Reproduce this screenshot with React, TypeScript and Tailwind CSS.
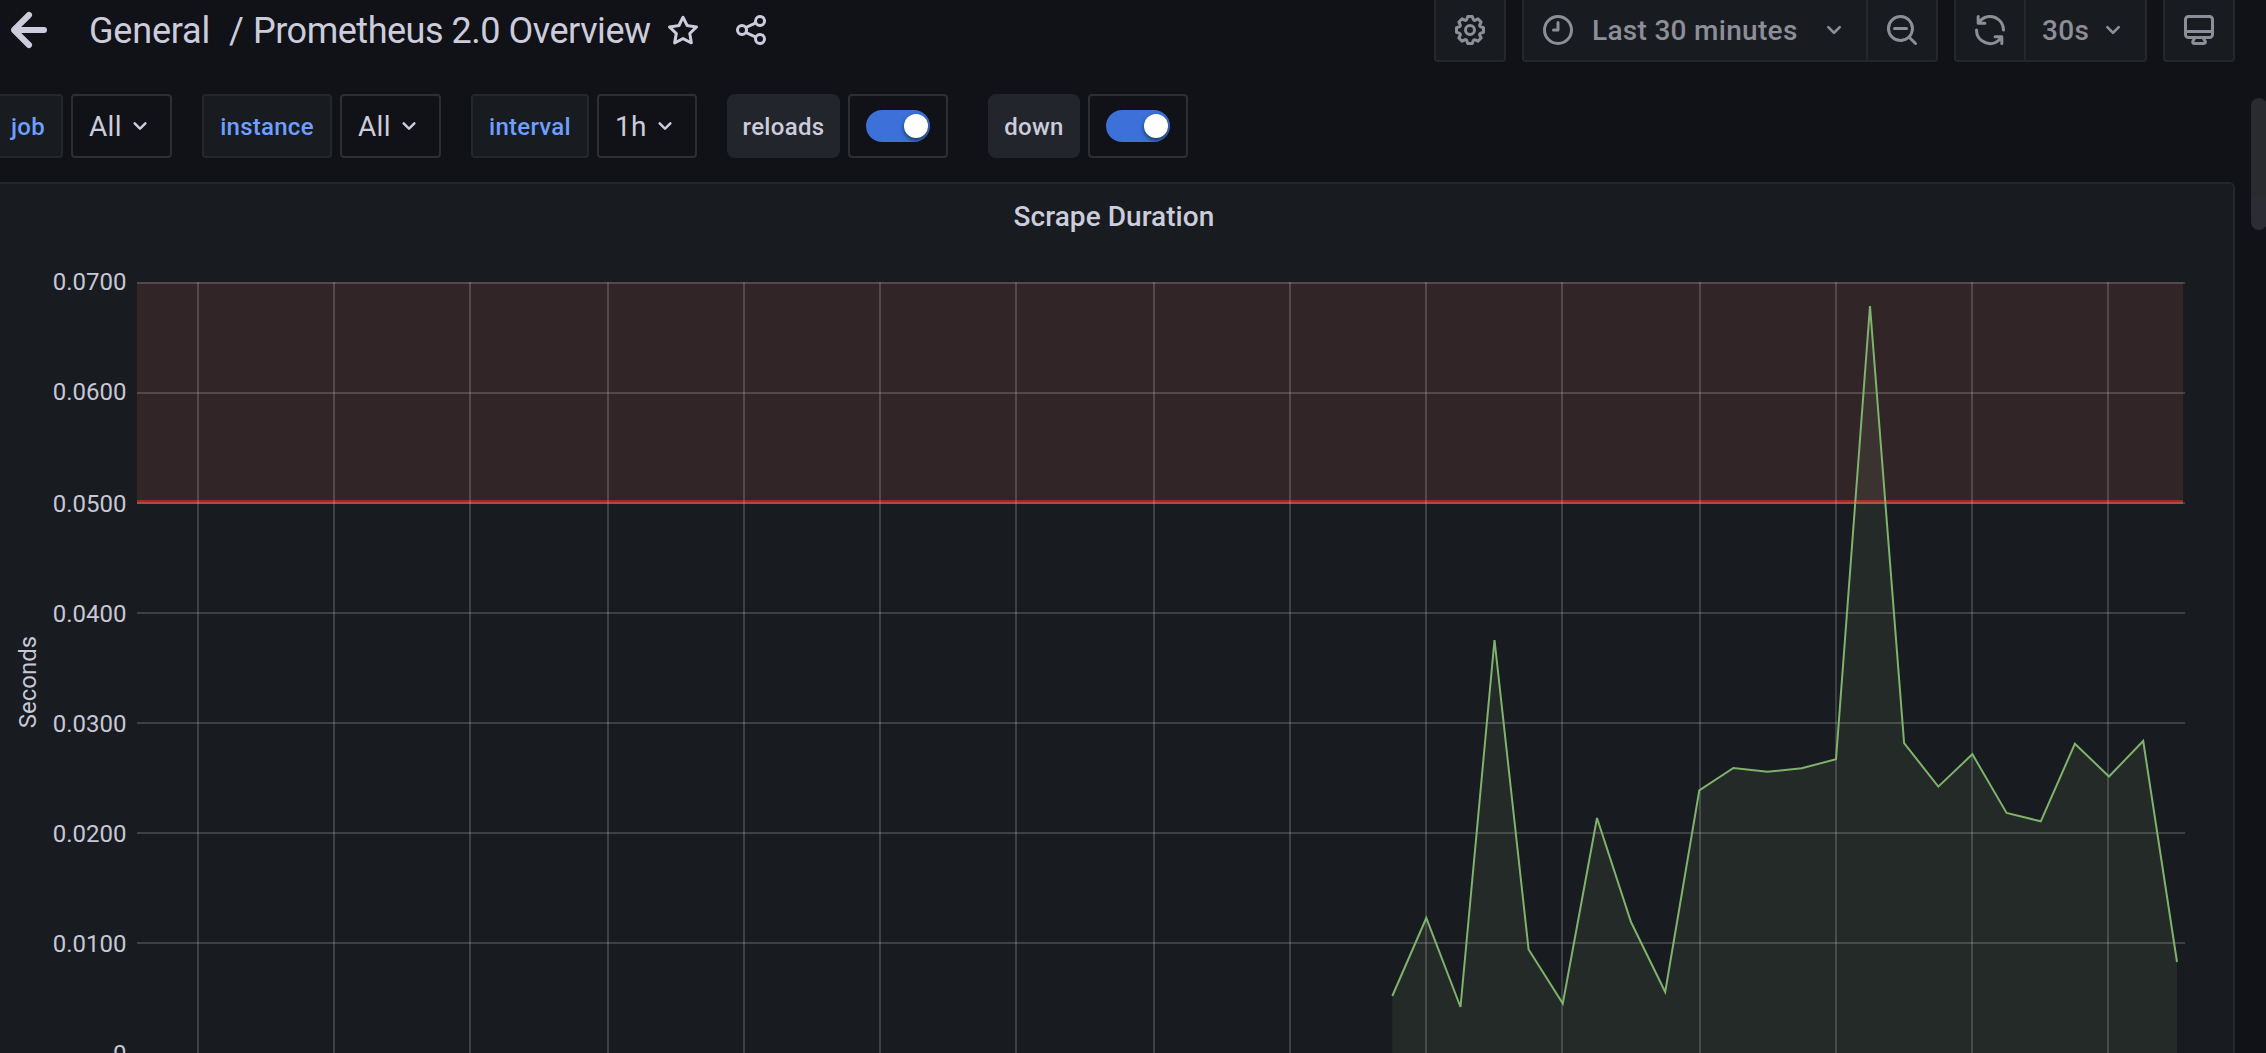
import type { ReactNode } from "react";

const ICONS = {
  arrowLeft:
    "M17,11H9.41l3.3-3.29a1,1,0,1,0-1.42-1.42l-5,5a1,1,0,0,0-.21.33,1,1,0,0,0,0,.76,1,1,0,0,0,.21.33l5,5a1,1,0,0,0,1.42,0,1,1,0,0,0,0-1.42L9.41,13H17a1,1,0,0,0,0-2Z",
  star: "M22,9.67A1,1,0,0,0,21.14,9l-5.69-.83L12.9,3a1,1,0,0,0-1.8,0L8.55,8.16,2.86,9a1,1,0,0,0-.81.68,1,1,0,0,0,.25,1l4.13,4-1,5.68A1,1,0,0,0,6.9,21.44L12,18.77l5.1,2.67a.93.93,0,0,0,.46.12,1,1,0,0,0,.59-.19,1,1,0,0,0,.4-1l-1-5.68,4.13-4A1,1,0,0,0,22,9.67Zm-6.15,4a1,1,0,0,0-.29.88l.72,4.2-3.76-2a1.06,1.06,0,0,0-.94,0l-3.76,2,.72-4.2a1,1,0,0,0-.29-.88l-3-3,4.21-.61a1,1,0,0,0,.76-.55L12,5.7l1.88,3.82a1,1,0,0,0,.76.55l4.21.61Z",
  share:
    "M18,14a4,4,0,0,0-3.08,1.48l-5.1-2.35a3.64,3.64,0,0,0,0-2.26l5.1-2.35A4,4,0,1,0,14,6a4.17,4.17,0,0,0,.07.71L8.79,9.14a4,4,0,1,0,0,5.72l5.28,2.43A4.17,4.17,0,0,0,14,18a4,4,0,1,0,4-4ZM18,4a2,2,0,1,1-2,2A2,2,0,0,1,18,4ZM6,14a2,2,0,1,1,2-2A2,2,0,0,1,6,14Zm12,6a2,2,0,1,1,2-2A2,2,0,0,1,18,20Z",
  cog: "M21.32,9.55l-1.89-.63.89-1.78A1,1,0,0,0,20.13,6L18,3.87a1,1,0,0,0-1.15-.19l-1.78.89-.63-1.89A1,1,0,0,0,13.5,2h-3a1,1,0,0,0-.95.68L8.92,4.57,7.14,3.68A1,1,0,0,0,6,3.87L3.87,6a1,1,0,0,0-.19,1.15l.89,1.78-1.89.63A1,1,0,0,0,2,10.5v3a1,1,0,0,0,.68.95l1.89.63-.89,1.78A1,1,0,0,0,3.87,18L6,20.13a1,1,0,0,0,1.15.19l1.78-.89.63,1.89a1,1,0,0,0,.95.68h3a1,1,0,0,0,.95-.68l.63-1.89,1.78.89A1,1,0,0,0,18,20.13L20.13,18a1,1,0,0,0,.19-1.15l-.89-1.78,1.89-.63A1,1,0,0,0,22,13.5v-3A1,1,0,0,0,21.32,9.55ZM20,12.78l-1.2.4A2,2,0,0,0,17.64,16l.57,1.14-1.1,1.1L16,17.64a2,2,0,0,0-2.79,1.16l-.4,1.2H11.22l-.4-1.2A2,2,0,0,0,8,17.64l-1.14.57-1.1-1.1L6.36,16A2,2,0,0,0,5.2,13.18L4,12.78V11.22l1.2-.4A2,2,0,0,0,6.36,8L5.79,6.89l1.1-1.1L8,6.36A2,2,0,0,0,10.82,5.2l.4-1.2h1.56l.4,1.2A2,2,0,0,0,16,6.36l1.14-.57,1.1,1.1L17.64,8a2,2,0,0,0,1.16,2.79l1.2.4ZM12,8a4,4,0,1,0,4,4A4,4,0,0,0,12,8Zm0,6a2,2,0,1,1,2-2A2,2,0,0,1,12,14Z",
  clock:
    "M12,2A10,10,0,1,0,22,12,10,10,0,0,0,12,2Zm0,18a8,8,0,1,1,8-8A8,8,0,0,1,12,20ZM12,6a1,1,0,0,0-1,1v4H9a1,1,0,0,0,0,2h3a1,1,0,0,0,1-1V7A1,1,0,0,0,12,6Z",
  zoomOut:
    "M21.71,20.29,18,16.61A9,9,0,1,0,16.61,18l3.68,3.68a1,1,0,0,0,1.42,0A1,1,0,0,0,21.71,20.29ZM11,18a7,7,0,1,1,7-7A7,7,0,0,1,11,18Zm4-8H7a1,1,0,0,0,0,2h8a1,1,0,0,0,0-2Z",
  sync: "M19.91,15.51H15.38a1,1,0,0,0,0,2h2.4A8,8,0,0,1,4,12a1,1,0,1,0-2,0,10,10,0,0,0,16.88,7.23V21a1,1,0,0,0,2,0V16.5A1,1,0,0,0,19.91,15.51ZM12,2A10,10,0,0,0,5.12,4.77V3a1,1,0,0,0-2,0V7.5a1,1,0,0,0,1,1h4.5a1,1,0,0,0,0-2H6.22A8,8,0,0,1,20,12a1,1,0,0,0,2,0A10,10,0,0,0,12,2Z",
  monitor:
    "M19,2H5A3,3,0,0,0,2,5V15a3,3,0,0,0,3,3H7.64l-.58,1a2,2,0,0,0,0,2,2,2,0,0,0,1.75,1h6.46A2,2,0,0,0,17,21a2,2,0,0,0,0-2l-.59-1H19a3,3,0,0,0,3-3V5A3,3,0,0,0,19,2ZM8.77,20,10,18H14l1.2,2ZM20,15a1,1,0,0,1-1,1H5a1,1,0,0,1-1-1V14H20Zm0-3H4V5A1,1,0,0,1,5,4H19a1,1,0,0,1,1,1Z",
  angleDown:
    "M17,9.17a1,1,0,0,0-1.41,0L12,12.71,8.46,9.17a1,1,0,0,0-1.41,0,1,1,0,0,0,0,1.42l4.24,4.24a1,1,0,0,0,1.42,0L17,10.59A1,1,0,0,0,17,9.17Z",
};

function Icon({ name, className = "size-9" }: { name: keyof typeof ICONS; className?: string }) {
  return (
    <svg viewBox="0 0 24 24" fill="currentColor" className={`shrink-0 ${className}`}>
      <path d={ICONS[name]} />
    </svg>
  );
}

function ToolButton({ className, children }: { className: string; children: ReactNode }) {
  return (
    <button
      className={`flex h-16 items-center border-2 border-[#25272c] bg-[#181b1f] text-[28px] leading-none font-medium tracking-[0.3px] text-[#8e8e99] ${className}`}
    >
      {children}
    </button>
  );
}

function Header() {
  return (
    <header className="flex h-[62px] items-end">
      <div className="-ml-[7px] flex h-16 items-center text-[#ccccdc]">
        <Icon name="arrowLeft" className="size-[72px]" />
        <h1 className="ml-6 w-[576px] pt-0.5 text-[36px] leading-none tracking-[-0.48px] whitespace-pre">
          <span className="inline-block w-[140px] tracking-[-0.2px]">General</span>
          <span className="inline-block w-[24px]">/</span>
          <span>Prometheus 2.0 Overview</span>
        </h1>
        <Icon name="star" />
        <Icon name="share" className="ml-8 size-9" />
      </div>
      <div className="mr-[31px] ml-auto flex gap-4">
        <ToolButton className="w-[72px] justify-center rounded">
          <Icon name="cog" />
        </ToolButton>
        <div className="flex">
          <ToolButton className="w-[346px] rounded-l pl-4">
            <Icon name="clock" />
            <span className="ml-4 w-[224px] pt-px text-left whitespace-nowrap">Last 30 minutes</span>
            <Icon name="angleDown" className="ml-0.5 size-8" />
          </ToolButton>
          <ToolButton className="-ml-0.5 w-[72px] justify-center rounded-r">
            <Icon name="zoomOut" />
          </ToolButton>
        </div>
        <div className="flex">
          <ToolButton className="w-[72px] justify-center rounded-l">
            <Icon name="sync" />
          </ToolButton>
          <ToolButton className="-ml-0.5 w-[123px] rounded-r pl-4">
            <span className="w-[55px] pt-px text-left">30s</span>
            <Icon name="angleDown" className="size-8" />
          </ToolButton>
        </div>
        <ToolButton className="w-[72px] justify-center rounded">
          <Icon name="monitor" />
        </ToolButton>
      </div>
    </header>
  );
}

function VariableSelect({ label, value, labelClass, valueClass }: { label: string; value: string; labelClass: string; valueClass: string }) {
  return (
    <div className="mr-[30px] flex gap-2">
      <div
        className={`flex h-16 items-center justify-center rounded border-2 border-[#25272c] bg-[#181b1f] pt-0.5 text-2xl font-medium tracking-[0.25px] text-[#6e9fff] ${labelClass}`}
      >
        {label}
      </div>
      <div className={`flex h-16 items-center rounded border-2 border-[#2d2e34] text-[28px] tracking-[0.3px] text-[#ccccdc] ${valueClass}`}>
        <span className="pt-px">{value}</span>
        <Icon name="angleDown" className="ml-[3px] size-[30px]" />
      </div>
    </div>
  );
}

function VariableToggle({ label, labelClass }: { label: string; labelClass: string }) {
  return (
    <div className="mr-10 flex gap-2">
      <div className={`flex h-16 items-center justify-center rounded-lg bg-[#22252b] pt-0.5 text-2xl font-medium tracking-[0.3px] text-[#ccccdc] ${labelClass}`}>
        {label}
      </div>
      <div className="flex h-16 w-[100px] items-center rounded border-2 border-[#2d2e34] pl-4">
        <div className="flex h-8 w-16 items-center justify-end overflow-hidden rounded-full bg-[#3d71d9] pr-0.5">
          <div className="size-6 rounded-full bg-white shadow-[0_2px_4px_rgba(0,0,0,0.6)]" />
        </div>
      </div>
    </div>
  );
}

const GRID_X = [198, 334, 470, 608, 744, 880, 1016, 1154, 1290, 1426, 1562, 1700, 1836, 1972, 2108];

const Y_TICKS = [
  { label: "0.0700", line: 283, base: 290 },
  { label: "0.0600", line: 393, base: 400 },
  { label: "0.0500", line: 503, base: 512 },
  { label: "0.0400", line: 613, base: 622 },
  { label: "0.0300", line: 723, base: 732 },
  { label: "0.0200", line: 833, base: 842 },
  { label: "0.0100", line: 943, base: 952 },
  { label: "0", line: 1054, base: 1062 },
];

const SERIES = [
  [1392.3, 996], [1426.3, 918], [1460.5, 1007], [1494.5, 640], [1528.6, 949.5], [1562.8, 1003.5],
  [1597, 818], [1631, 922], [1665.2, 992], [1699.3, 790.3], [1733.4, 768], [1767.6, 771.7],
  [1801.7, 768.3], [1836, 759.2], [1870, 306], [1904.1, 743], [1938.3, 786.6], [1972.4, 754.2],
  [2006.6, 813], [2040.8, 821.3], [2074.9, 743.8], [2109, 776.5], [2143.2, 741], [2177, 962],
];

const linePoints = SERIES.map((p) => p.join(",")).join(" ");
const areaPoints = `1392.3,1053 ${linePoints} 2177,1053`;

function Chart() {
  return (
    <svg viewBox="0 236 2233 817" className="block h-[817px] w-[2233px]" fontFamily="Roboto, sans-serif">
      <rect x="137" y="282" width="2046" height="220" fill="#f17769" fillOpacity="0.12" />
      <rect x="137" y="500" width="2046" height="4" fill="#a3281f" />
      <polygon points={areaPoints} fill="#90b179" fillOpacity="0.1" />
      <g fill="#c8c8c8" fillOpacity="0.22">
        {GRID_X.map((x) => (
          <rect key={x} x={x - 1} y="282" width="2" height="771" />
        ))}
        {Y_TICKS.map((t) => (
          <rect key={t.label} x="137" y={t.line - 1} width="2048" height="2" />
        ))}
      </g>
      <polyline points={linePoints} fill="none" stroke="#7eb26d" strokeWidth="2" />
      <g fill="#c7c7d8" fontSize="24" textAnchor="end">
        {Y_TICKS.map((t) => (
          <text key={t.label} x="126.5" y={t.base}>
            {t.label}
          </text>
        ))}
      </g>
      <text transform="translate(36 682) rotate(-90)" fill="#c7c7d8" fontSize="24" textAnchor="middle">
        Seconds
      </text>
    </svg>
  );
}

export default function App() {
  return (
    <div className="relative h-[1053px] w-[2266px] overflow-hidden bg-[#111217] font-['Roboto',sans-serif]">
      <Header />
      <div className="flex pt-8 pb-6">
        <VariableSelect label="job" value="All" labelClass="w-[83px] -ml-5 pl-[13px]" valueClass="w-[101px] pl-4" />
        <VariableSelect label="instance" value="All" labelClass="w-[130px]" valueClass="w-[101px] pl-4" />
        <VariableSelect label="interval" value="1h" labelClass="w-[118px]" valueClass="w-[100px] pl-4" />
        <VariableToggle label="reloads" labelClass="w-[113px]" />
        <VariableToggle label="down" labelClass="w-[92px]" />
      </div>
      <section className="w-[2235px] rounded-tr-md border-t-2 border-r-2 border-[#25272c] bg-[#181b1f]">
        <h2 className="flex h-[52px] items-center justify-center pt-3.5 pr-[5px] text-[28px] leading-none font-medium tracking-[0.05px] text-[#ccccdc]">
          Scrape Duration
        </h2>
        <Chart />
      </section>
      <div className="absolute top-[98px] -right-px h-[132px] w-4 rounded-full bg-linear-to-b from-[#2a2b2f] from-74% to-[#2c2c35] to-75%" />
    </div>
  );
}
